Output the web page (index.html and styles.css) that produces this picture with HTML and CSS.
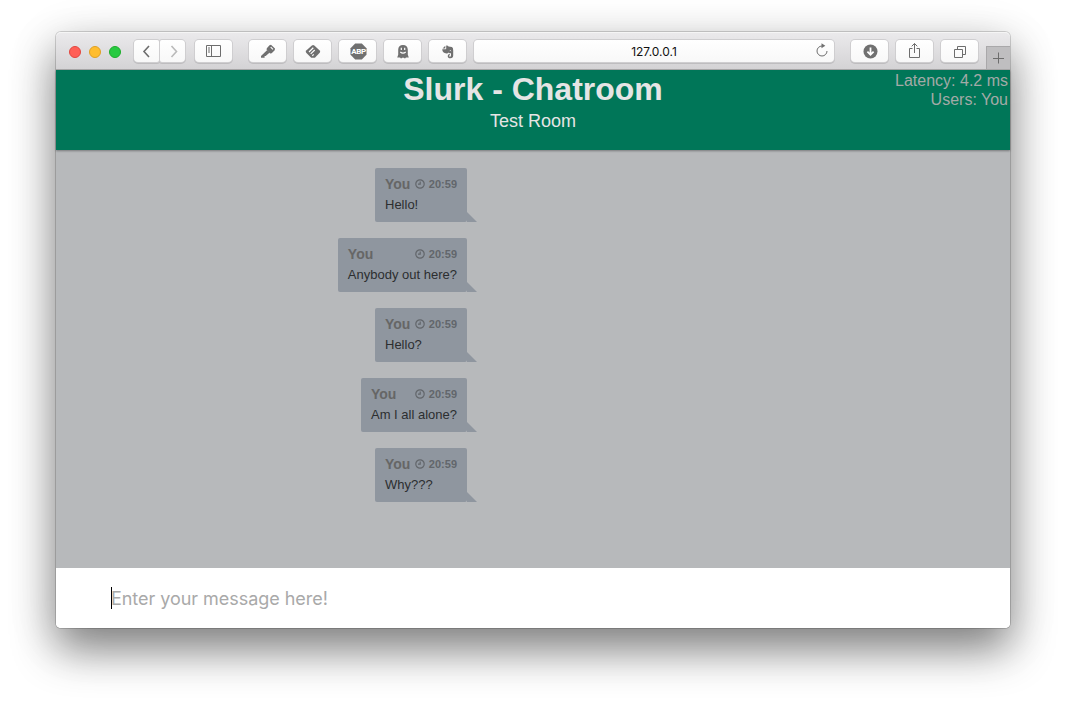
FILE: index.html
```html
<!DOCTYPE html>
<html lang="en">
<head>
<meta charset="utf-8">
<title>Slurk - Chatroom</title>
<link rel="stylesheet" href="styles.css">
</head>
<body>
<main class="window">
  <div class="toolbar">
    <div class="lights"><i class="light close"></i><i class="light minimize"></i><i class="light expand"></i></div>
    <div class="nav">
      <button class="btn half" aria-label="Back"><svg width="25" height="23" viewBox="0 0 25 23"><path d="m14 6-5 5.5 5 5.5" stroke-width="1.6"/></svg></button>
      <button class="btn half dim" aria-label="Forward"><svg width="25" height="23" viewBox="0 0 25 23"><path d="m10.5 6 5 5.5-5 5.5" stroke-width="1.6"/></svg></button>
    </div>
    <button class="btn sidebar" aria-label="Sidebar"><svg width="16" height="13" viewBox="0 0 16 13"><path d="M.5.5h14v11H.5zM5.5.5v11M2 3h2M2 5h2M2 7h2"/></svg></button>
    <div class="extensions">
      <button class="btn" aria-label="Passwords"><svg width="16" height="16" viewBox="0 0 16 16"><g class="solid"><path fill-rule="evenodd" d="M9.5 1.2 11 .8l4 3.8-.3 1.6-3 3-1.6.2-3.5-3.6.2-1.5zm1.6 1.6-.8.8 2.3 2.2.8-.8z"/><path d="m7.2 6.1 2.5 2.5-4 3.4-1.1.1v1.7H1v-1.9z"/></g></svg></button>
      <button class="btn" aria-label="Feedly"><svg width="16" height="16" viewBox="0 0 16 16"><path class="solid" d="M6.9 1.5q1.2-1 2.4 0l5.4 5.1q1 1 0 2.1l-4.8 5H6.2L1.2 8.8q-1-1.1 0-2.2z"/><path class="light-line" d="m4 8 4.3-4.2M5.7 9.9l4-3.9M7.3 11.7l1.4-1.3" stroke-width="1.2"/></svg></button>
      <button class="btn" aria-label="Adblock"><svg width="17" height="17" viewBox="0 0 17 17"><path class="solid" d="M5.2.5h6.6l4.7 4.7v6.6l-4.7 4.7H5.2L.5 11.8V5.2z"/><text x="8.5" y="11.3">ABP</text></svg></button>
      <button class="btn" aria-label="Ghostery"><svg width="14" height="16" viewBox="0 0 14 16"><path class="solid" d="M2.2 5.7C2.2 2.6 4 1 7 1s4.8 1.6 4.8 4.7v5.1l1 2.8H10l-1 .8-2-.8-2 .8-1-.8H1.2l1-2.8z"/><path class="light-line" d="M5.3 3.7v2.2M8.7 3.7v2.2M4.3 8q2.7 2.2 5.4 0" stroke-width="1.2"/></svg></button>
      <button class="btn" aria-label="Evernote"><svg width="14" height="16" viewBox="0 0 14 16"><path class="solid" d="M5.2 1.5q1.8-.2 2.3.9l3.4.6q1.3.2 1.3 3.2v5.3q-.1 2.8-2.7 2.8-2.8 0-2.8-2.3 0-2 2.2-2v1.3q-1 0-.9.8.2.8 1.4.7l.6-1.3V9.3q-1.7.2-2.3-.9-.6 1.1-2.2 1Q1.4 9 1.2 5.3h3.3q.7 0 .7-.8zM4.3 1.8v2.7H1.5z"/><path class="light-line" d="M8.8 6.7q.8-.5 1.3.4" stroke-width=".8"/></svg></button>
    </div>
    <div class="address"><span>127.0.0.1</span><svg class="reload" width="14" height="15" viewBox="0 0 14 15"><path d="M7 3a5 5 0 1 0 5 5"/><path class="solid" d="M6.5.3v5l3.8-2.5z"/></svg></div>
    <div class="actions">
      <button class="btn" aria-label="Downloads"><svg width="15" height="15" viewBox="0 0 15 15"><circle class="solid" cx="7.5" cy="7.5" r="7"/><path class="light-line" d="M7.5 3.5v7M4.4 7.7l3.1 3.1 3.1-3.1" stroke-width="1.8"/></svg></button>
      <button class="btn share" aria-label="Share"><svg width="14" height="17" viewBox="0 0 14 17"><path d="M4.5 6.5h-3v9h10v-9h-3M6.5 11V1.5M3.7 4.3l2.8-2.8 2.8 2.8"/></svg></button>
      <button class="btn" aria-label="Tabs"><svg width="14" height="14" viewBox="0 0 14 14"><path d="M1.5 4.5h8v8h-8zM4.5 4.5v-3h8v8h-3"/></svg></button>
    </div>
    <button class="new-tab" aria-label="New tab"><svg width="12" height="12" viewBox="0 0 12 12"><path d="M5.5.5v11M0 6.5h11"/></svg></button>
  </div>
  <header class="header">
    <h1>Slurk - Chatroom</h1>
    <div class="room">Test Room</div>
    <div class="status">Latency: 4.2 ms<br>Users: You</div>
  </header>
  <section class="chat">
    <article class="message"><div class="meta"><b>You</b><time><svg width="10" height="10" viewBox="0 0 10 10"><circle cx="5" cy="5" r="4.2"/><path d="M5.2 2.5v2.7H3"/></svg>20:59</time></div><p>Hello!</p></article>
    <article class="message"><div class="meta"><b>You</b><time><svg width="10" height="10" viewBox="0 0 10 10"><circle cx="5" cy="5" r="4.2"/><path d="M5.2 2.5v2.7H3"/></svg>20:59</time></div><p>Anybody out here?</p></article>
    <article class="message"><div class="meta"><b>You</b><time><svg width="10" height="10" viewBox="0 0 10 10"><circle cx="5" cy="5" r="4.2"/><path d="M5.2 2.5v2.7H3"/></svg>20:59</time></div><p>Hello?</p></article>
    <article class="message"><div class="meta"><b>You</b><time><svg width="10" height="10" viewBox="0 0 10 10"><circle cx="5" cy="5" r="4.2"/><path d="M5.2 2.5v2.7H3"/></svg>20:59</time></div><p>Am I all alone?</p></article>
    <article class="message"><div class="meta"><b>You</b><time><svg width="10" height="10" viewBox="0 0 10 10"><circle cx="5" cy="5" r="4.2"/><path d="M5.2 2.5v2.7H3"/></svg>20:59</time></div><p>Why???</p></article>
  </section>
  <footer class="composer"><i class="caret"></i><span>Enter your message here!</span></footer>
</main>
</body>
</html>
```
FILE: styles.css
```css
* { box-sizing: border-box; }
body { margin: 0; height: 708px; padding: 32px 56px 0; overflow: hidden; background: #fff; font-family: "Liberation Sans", Arial, sans-serif; }
.window { width: 954px; height: 596px; display: flex; flex-direction: column; border-radius: 5px; background: linear-gradient(#b7b9bb 536px, #fff 536px); box-shadow: 0 0 0 1px rgba(0,0,0,.16), 0 22px 44px rgba(0,0,0,.44), 0 10px 50px rgba(0,0,0,.14); }
.toolbar { height: 38px; flex: none; display: flex; align-items: flex-start; padding: 8px 0 0 13px; border-bottom: 1px solid #aaa9aa; border-radius: 5px 5px 0 0; background: linear-gradient(#ebeaec, #d4d3d5); box-shadow: inset 0 1px #f5f5f5; }
.lights { width: 65px; height: 23px; display: flex; gap: 8px; align-items: center; }
.light { width: 12px; height: 12px; border-radius: 50%; border: 1px solid; }
.close { background: #ff5f57; border-color: #e2463f; }
.minimize { background: #ffbd2e; border-color: #dfa023; }
.expand { background: #28ca41; border-color: #1dad2b; }
.nav { display: flex; gap: 1px; margin-right: 9px; }
.btn { width: 37px; height: 22px; flex: none; padding: 0; border: 0; border-radius: 4px; display: flex; align-items: center; justify-content: center; background: linear-gradient(#fff, #f8f8f8); box-shadow: 0 0 0 1px #cfced0, 0 1px 0 1px #bebdbf; }
.half { width: 25px; }
.nav .btn:first-child { border-radius: 4px 2px 2px 4px; }
.nav .btn:last-child { border-radius: 2px 4px 4px 2px; }
svg { display: block; flex: none; overflow: visible; fill: none; stroke: #6d6d6d; stroke-width: 1; }
.btn svg { position: relative; top: .5px; left: .5px; }
.dim svg { stroke: #bababa; }
.solid { fill: #707070; stroke: none; }
.light-line { stroke: #fff; fill: none; }
svg text { font: bold 8px Roboto, sans-serif; letter-spacing: -.3px; fill: #fff; stroke: none; text-anchor: middle; }
.sidebar { margin: 0 17px 0 1px; }
.share svg { margin-top: -2px; }
.extensions, .actions { display: flex; gap: 8px; }
.address { width: 360px; height: 22px; flex: none; margin: 0 17px 0 8px; display: flex; align-items: center; justify-content: center; position: relative; border-radius: 4px; background: linear-gradient(#fff, #f8f8f8); box-shadow: 0 0 0 1px #cfced0, 0 1px 0 1px #bebdbf; font: 12px Inter, sans-serif; color: #111; }
.address span { padding-top: 1px; }
.reload { position: absolute; right: 5px; top: 3px; }
.new-tab { width: 24px; height: 23px; margin: 6px 0 0 auto; padding: 0; border: solid #a9a8aa; border-width: 1px 0 0 1px; background: #bfbec0; display: flex; align-items: center; justify-content: center; }
.header { height: 80px; flex: none; position: relative; background: #007658; color: #e5e5e5; text-align: center; box-shadow: 0 1px 2px rgba(0,0,0,.35); }
h1 { margin: 0; font-size: 32px; line-height: 38px; }
.room { font-size: 18px; line-height: 26px; }
.status { position: absolute; top: 1px; right: 2px; font-size: 16px; line-height: 19px; text-align: right; color: #a3aaa7; }
.chat { height: 418px; flex: none; width: 411px; padding-top: 18px; display: flex; flex-direction: column; gap: 16px; align-items: flex-end; }
.message { position: relative; height: 54px; min-width: 92px; padding: 6px 10px; background: #8f969f; border-radius: 2px; }
.message::after { content: ""; position: absolute; left: 100%; bottom: 0; border: 5px solid; border-color: transparent transparent #8f969f #8f969f; }
.meta { height: 19px; display: flex; align-items: center; justify-content: space-between; font-size: 14px; color: #666; }
time { display: flex; align-items: center; gap: 4px; font-size: 11px; font-weight: bold; color: #62666b; }
time svg { stroke: #62666b; stroke-width: 1.2; }
p { margin: 4px 0 0; font-size: 13px; line-height: 16px; color: #2c2e30; white-space: nowrap; }
.composer { height: 60px; flex: none; display: flex; align-items: center; padding-left: 55px; background: #fff; border-radius: 0 0 5px 5px; font: 18px Inter, sans-serif; letter-spacing: -.04px; color: #a9a9a9; }
.caret { width: 1px; height: 22px; background: #000; }
.composer span { margin-left: -1px; }
```
